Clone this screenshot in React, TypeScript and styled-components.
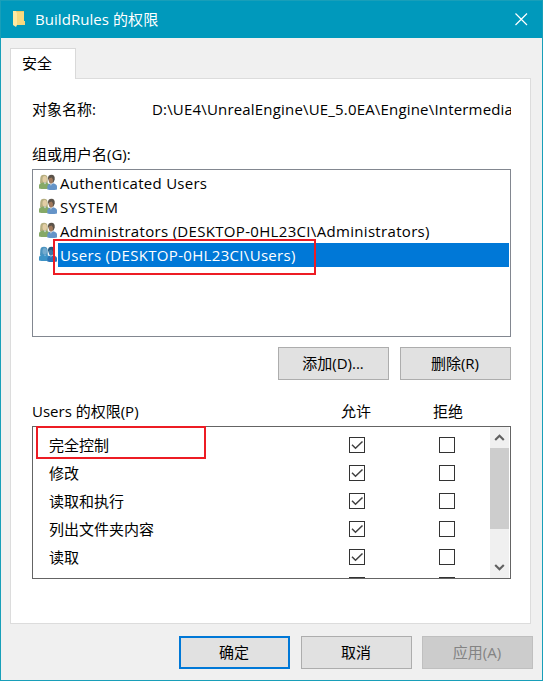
import React from "react";
import styled, { createGlobalStyle, css } from "styled-components";

const GlobalStyle = createGlobalStyle`
  *, *::before, *::after { box-sizing: border-box; }
  html, body { margin: 0; padding: 0; }
  body {
    width: 543px;
    height: 681px;
    overflow: hidden;
    font-family: "Open Sans", "Noto Sans CJK SC", sans-serif;
    font-size: 15px;
    line-height: 24px;
    color: #000;
  }
`;

const Dialog = styled.main`
  width: 543px;
  height: 681px;
  display: flex;
  flex-direction: column;
  background: #f0f0f0;
  border: 1px solid #189fb9;
`;

const TitleBar = styled.header`
  height: 37px;
  flex: none;
  display: flex;
  align-items: center;
  padding: 0 14px 1px 12px;
  background: #0099bc;
  color: #fff;
`;

const FolderIcon = styled.svg`
  width: 13px;
  height: 18px;
  flex: none;
  margin-right: 9px;
`;

const CloseIcon = styled.svg`
  width: 13px;
  height: 13px;
  margin-left: auto;
`;

const Label = styled.span<{ $track?: number }>`
  white-space: pre;
  letter-spacing: ${(p) => p.$track ?? 0}px;
`;

const Content = styled.div`
  flex: 1;
  display: flex;
  flex-direction: column;
  padding: 10px 11px 11px 9px;
`;

const Tab = styled.div`
  width: 66px;
  height: 31px;
  flex: none;
  padding: 2px 0 0 11px;
  margin-bottom: -1px;
  background: #fff;
  border: 1px solid #d9d9d9;
  border-bottom: 0;
  z-index: 1;
`;

const Panel = styled.section`
  height: 546px;
  flex: none;
  display: flex;
  flex-direction: column;
  padding: 18px 19px 0 21px;
  background: #fff;
  border: 1px solid #dcdcdc;
`;

const ObjectRow = styled.div`
  height: 24px;
  display: grid;
  grid-template-columns: 120px 1fr;
  overflow: hidden;
`;

const PathText = styled(Label)`
  overflow: hidden;
`;

const SectionTitle = styled.div`
  height: 24px;
  display: flex;
  margin-top: 21px;
`;

const UserList = styled.div`
  height: 168px;
  flex: none;
  margin-top: 3px;
  padding: 1px;
  border: 1px solid #828790;
`;

const UserRow = styled.div`
  position: relative;
  height: 24px;
  display: flex;
  padding-left: 5px;
`;

const UserName = styled.div<{ $selected?: boolean }>`
  flex: 1;
  display: flex;
  margin-left: 1px;
  padding-left: 2px;
  ${(p) => p.$selected && css`
    background: #0078d7;
    color: #fff;
  `}
`;

const PeopleIcon = styled.svg`
  width: 18px;
  height: 17px;
  flex: none;
  margin-top: 3px;
`;

const Highlight = styled.div<{ $x: number; $y: number; $w: number; $h: number }>`
  position: absolute;
  left: ${(p) => p.$x}px;
  top: ${(p) => p.$y}px;
  width: ${(p) => p.$w}px;
  height: ${(p) => p.$h}px;
  border: 2px solid #ed1c24;
  pointer-events: none;
  z-index: 2;
`;

const ButtonBar = styled.div<{ $top: number; $outset?: number }>`
  display: flex;
  justify-content: flex-end;
  gap: 11px;
  margin-top: ${(p) => p.$top}px;
  margin-right: ${(p) => -(p.$outset ?? 0)}px;
`;

const Button = styled.button<{ $primary?: boolean }>`
  width: 111px;
  height: 33px;
  padding: 0 1px 1px 0;
  font: inherit;
  color: #000;
  background: #e1e1e1;
  border: 1px solid #adadad;
  border-radius: 0;
  ${(p) => p.$primary && css`
    border: 2px solid #0078d7;
  `}
  &:disabled {
    color: #838383;
    background: #ccc;
    border-color: #bfbfbf;
    margin-left: -1px;
  }
`;

const PermissionHeader = styled.div`
  height: 24px;
  display: grid;
  grid-template-columns: 309px 92px 1fr;
  margin-top: 19px;
`;

const PermissionBox = styled.div`
  position: relative;
  height: 153px;
  flex: none;
  display: flex;
  margin-top: 3px;
  border: 1px solid #646464;
  padding-right: 1px;
`;

const PermissionRows = styled.div`
  flex: 1;
  height: 151px;
  overflow: hidden;
  padding-top: 10px;
`;

const PermissionRow = styled.div`
  height: 28px;
  display: grid;
  grid-template-columns: 300px 90px 16px;
  padding-left: 16px;
`;

const PermissionName = styled(Label)`
  margin-top: -4px;
`;

const CheckBox = styled.span`
  display: block;
  width: 16px;
  height: 16px;
  border: 1px solid #333;
  background: #fff;
  svg { display: block; }
`;

const ScrollBar = styled.div`
  width: 19px;
  display: flex;
  flex-direction: column;
  background: #f0f0f0;
`;

const ScrollArrow = styled.svg`
  width: 19px;
  height: 21px;
  flex: none;
`;

const ScrollThumb = styled.div`
  height: 81px;
  margin-bottom: auto;
  background: #cdcdcd;
`;

function People({ selected }: { selected?: boolean }) {
  const c = selected
    ? { hair: "#4a93bf", face: "#74abcf", top: "#3d93c6", hair2: "#24587f", face2: "#3f78a6", coat: "#2a74b8", shirt: "#68a8d6" }
    : { hair: "#b5ae80", face: "#e2cda4", top: "#86a967", hair2: "#5b534a", face2: "#a27a5d", coat: "#6594c8", shirt: "#c4d3da" };
  return (
    <PeopleIcon viewBox="0 0 18 17">
      <path d="M1.3 4Q1.5 .8 5 .7Q8.4 .8 8.6 4L8.8 9H1Z" fill={c.hair} />
      <ellipse cx="5.7" cy="5.2" rx="2.2" ry="3.3" fill={c.face} />
      <path d="M0 14.5V11.5Q.2 9 4 8.5L6 9.5 8 8.7 10 10V14.5Q5 15.6 0 14.5Z" fill={c.top} />
      <path d="M4.8 8.5L6 10.6 7 8.6Z" fill={c.shirt} />
      <path d="M9 4.5Q8.8 .8 12.5 .7Q16.2 .8 15.7 5.5L14.5 8.5H10.3Z" fill={c.hair2} />
      <path d="M9.8 4.6L12.6 3.6 14 5.4 13.7 8.8 11.8 10 10.2 8Z" fill={c.face2} />
      <path d="M8.3 15.5V12.6Q8.4 10.3 11 9.5L12 10.6 14 9.3Q17.8 10 18 12.5V15.5Q13 16.7 8.3 15.5Z" fill={c.coat} />
      <path d="M11 9.6L11.9 12 12.6 10.3Z" fill={c.shirt} />
    </PeopleIcon>
  );
}

const users = [
  { name: "Authenticated Users", track: 0.27 },
  { name: "SYSTEM", track: 0.6 },
  { name: "Administrators (DESKTOP-0HL23CI\\Administrators)", track: 0.32 },
  { name: "Users (DESKTOP-0HL23CI\\Users)", track: 0.32, selected: true },
];

const permissions = ["完全控制", "修改", "读取和执行", "列出文件夹内容", "读取", ""];

export default function App() {
  return (
    <>
      <GlobalStyle />
      <Dialog>
        <TitleBar>
          <FolderIcon viewBox="0 0 13 18">
            <path d="M3 1H11V15H3Z" fill="#efc864" />
            <path d="M9 11H12V15H9Z" fill="#f5d77e" />
            <path d="M0 1H3L4 3V15L3 17 0 15Z" fill="#ffe9a2" />
            <path d="M4 2H11V11L9 15H4Z" fill="#f8da80" />
          </FolderIcon>
          <Label $track={0.06}>BuildRules 的权限</Label>
          <CloseIcon viewBox="0 0 13 13">
            <path d="M.5.5L12 12M12 .5L.5 12" stroke="#fff" strokeWidth="1.2" />
          </CloseIcon>
        </TitleBar>
        <Content>
          <Tab>安全</Tab>
          <Panel>
            <ObjectRow>
              <Label>对象名称:</Label>
              <PathText $track={0.18}>D:\UE4\UnrealEngine\UE_5.0EA\Engine\Intermedia</PathText>
            </ObjectRow>
            <SectionTitle><Label>组或用户名(G):</Label></SectionTitle>
            <UserList>
              {users.map((u) => (
                <UserRow key={u.name}>
                  <People selected={u.selected} />
                  <UserName $selected={u.selected}>
                    <Label $track={u.track}>{u.name}</Label>
                  </UserName>
                  {u.selected && <Highlight $x={19} $y={-4} $w={263} $h={36} />}
                </UserRow>
              ))}
            </UserList>
            <ButtonBar $top={10}>
              <Button>添加(D)...</Button>
              <Button>删除(R)</Button>
            </ButtonBar>
            <PermissionHeader>
              <Label>Users 的权限(P)</Label>
              <Label>允许</Label>
              <Label>拒绝</Label>
            </PermissionHeader>
            <PermissionBox>
              <PermissionRows>
                {permissions.map((name) => (
                  <PermissionRow key={name}>
                    <PermissionName>{name}</PermissionName>
                    <CheckBox>
                      <svg width="14" height="14" viewBox="0 0 14 14">
                        <path d="M2 6.8L5.5 10.3 12.5 3.5" fill="none" stroke="#404040" strokeWidth="1.5" />
                      </svg>
                    </CheckBox>
                    <CheckBox />
                  </PermissionRow>
                ))}
              </PermissionRows>
              <ScrollBar>
                <ScrollArrow viewBox="0 0 19 21">
                  <path d="M5.2 13L9.5 8.7 13.8 13" fill="none" stroke="#606060" strokeWidth="2.1" />
                </ScrollArrow>
                <ScrollThumb />
                <ScrollArrow viewBox="0 0 19 21">
                  <path d="M5.2 8L9.5 12.3 13.8 8" fill="none" stroke="#606060" strokeWidth="2.1" />
                </ScrollArrow>
              </ScrollBar>
              <Highlight $x={3} $y={-1} $w={170} $h={33} />
            </PermissionBox>
          </Panel>
          <ButtonBar $top={12} $outset={2}>
            <Button $primary>确定</Button>
            <Button>取消</Button>
            <Button disabled>应用(A)</Button>
          </ButtonBar>
        </Content>
      </Dialog>
    </>
  );
}
